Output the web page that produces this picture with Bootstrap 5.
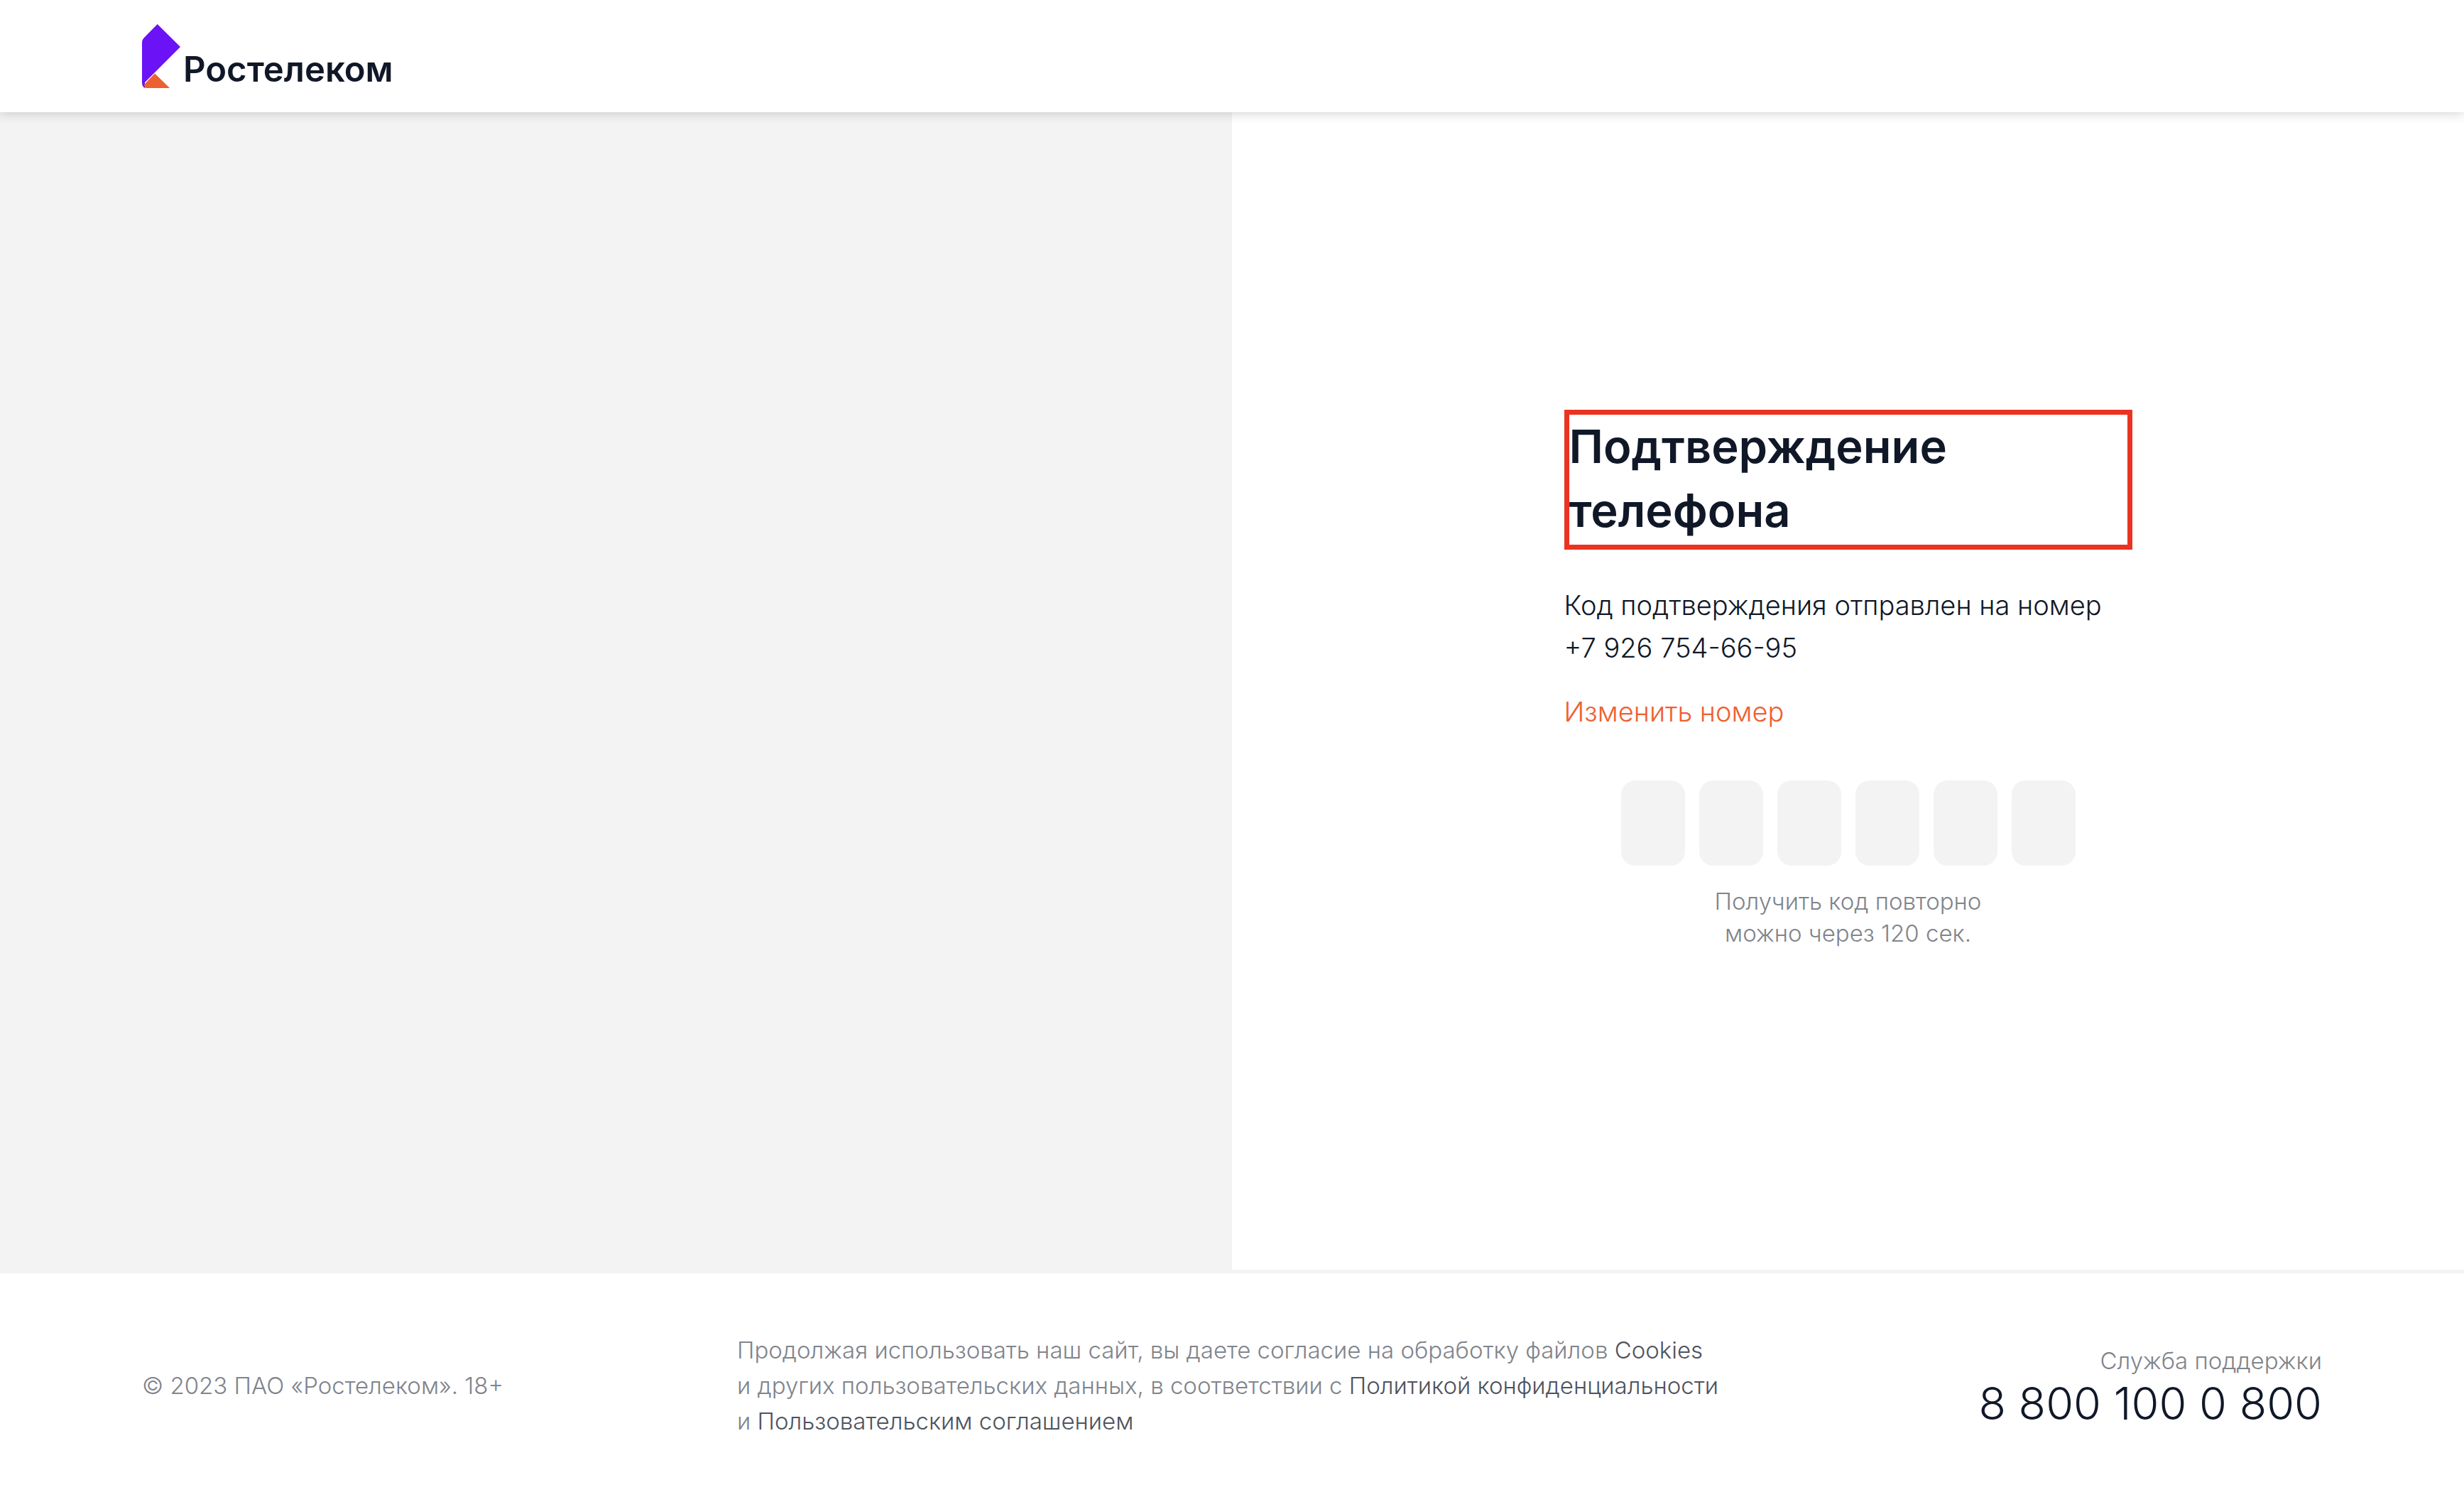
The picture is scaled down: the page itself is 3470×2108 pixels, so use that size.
<!DOCTYPE html>
<html lang="ru">
<head>
<meta charset="utf-8">
<meta name="viewport" content="width=device-width, initial-scale=1">
<title>Ростелеком — Подтверждение телефона</title>
<link href="https://cdn.jsdelivr.net/npm/bootstrap@5.3.0/dist/css/bootstrap.min.css" rel="stylesheet">
<style>
body { font-family: Inter, Roboto, sans-serif; color: #101828; background: #fff; }
.edge { padding-left: 200px; padding-right: 200px; }
.site-header { height: 158px; box-shadow: 0 0 16px rgba(16, 24, 40, .24); z-index: 1; }
.brand { gap: 4px; padding: 34px 0; color: #101828; }
.brand svg { width: 54px; height: 90px; }
.brand-name { font-size: 49px; line-height: 52px; font-weight: 600; }
.promo { background: #f3f3f3; }
.panel { border-bottom: 5px solid #f3f3f3; padding-bottom: 32px; }
.confirm { width: 800px; max-width: 100%; }
.confirm-title { border: 7px solid #eb3323; font-size: 65px; line-height: 90px; padding-bottom: 3px; font-weight: 600; margin-bottom: 48px; }
.note { font-size: 38px; line-height: 60px; font-weight: 300; margin-bottom: 30px; }
.change { font-size: 38px; line-height: 60px; font-weight: 300; color: #ef6030; }
.code { gap: 20px; margin-top: 67px; margin-bottom: 28px; }
.digit { width: 90px; height: 120px; border: 0; border-radius: 20px; background: #f3f3f3; font-size: 48px; padding: 0; }
.resend { font-size: 33px; line-height: 45px; font-weight: 300; color: #80848c; }
.site-footer { min-height: 315px; font-size: 33px; line-height: 50px; font-weight: 300; color: #80848c; }
.copyright { width: 838px; }
.site-footer a { color: #4e535d; }
.site-footer .phone { font-size: 63px; line-height: 70px; color: #101828; }
</style>
</head>
<body class="d-flex flex-column min-vh-100">
<header class="site-header edge bg-white position-relative">
  <a class="brand d-inline-flex align-items-end text-decoration-none" href="#">
    <svg viewBox="0 0 54 90" aria-hidden="true">
      <path fill="#6b13f6" d="M21.700 0 54 32 4 82 4 90Q0 88 0 82V25Q0 22 3 19Z"/>
      <path fill="#ed6030" d="M18 69.500 39 90H5Q3 88 3 85Z"/>
    </svg>
    <span class="brand-name">Ростелеком</span>
  </a>
</header>
<main class="row g-0 flex-grow-1">
  <section class="col-6 promo"></section>
  <section class="col-6 panel d-flex align-items-center justify-content-center">
    <form class="confirm">
      <h1 class="confirm-title">Подтверждение<br>телефона</h1>
      <p class="note">Код подтверждения отправлен на номер<br>+7 926 754-66-95</p>
      <a class="change d-block text-decoration-none" href="#">Изменить номер</a>
      <div class="code d-flex justify-content-center">
        <input class="digit text-center" type="text" inputmode="numeric" maxlength="1" aria-label="Цифра 1">
        <input class="digit text-center" type="text" inputmode="numeric" maxlength="1" aria-label="Цифра 2">
        <input class="digit text-center" type="text" inputmode="numeric" maxlength="1" aria-label="Цифра 3">
        <input class="digit text-center" type="text" inputmode="numeric" maxlength="1" aria-label="Цифра 4">
        <input class="digit text-center" type="text" inputmode="numeric" maxlength="1" aria-label="Цифра 5">
        <input class="digit text-center" type="text" inputmode="numeric" maxlength="1" aria-label="Цифра 6">
      </div>
      <p class="resend text-center mb-0">Получить код повторно<br>можно через 120 сек.</p>
    </form>
  </section>
</main>
<footer class="site-footer edge d-flex align-items-center">
  <div class="copyright flex-shrink-0">© 2023 ПАО «Ростелеком». 18+</div>
  <div class="flex-grow-1">Продолжая использовать наш сайт, вы даете согласие на обработку файлов <a class="text-decoration-none" href="#">Cookies</a><br>и других пользовательских данных, в соответствии с <a class="text-decoration-none" href="#">Политикой конфиденциальности</a><br>и <a class="text-decoration-none" href="#">Пользовательским соглашением</a></div>
  <div class="text-end text-nowrap">Служба поддержки<a class="phone d-block text-decoration-none" href="tel:88001000800">8 800 100 0 800</a></div>
</footer>
<script src="https://cdn.jsdelivr.net/npm/bootstrap@5.3.0/dist/js/bootstrap.bundle.min.js"></script>
</body>
</html>
